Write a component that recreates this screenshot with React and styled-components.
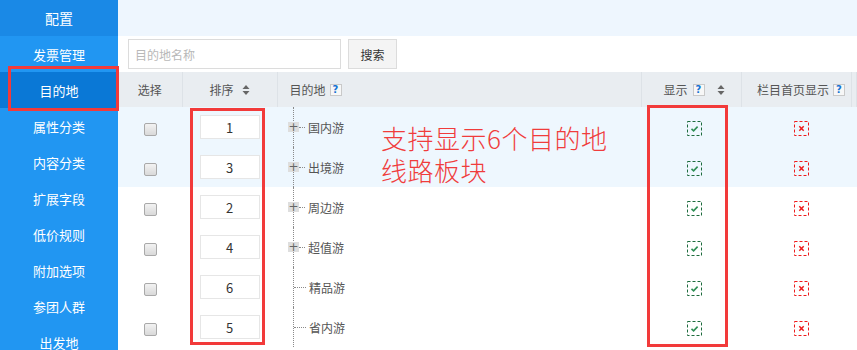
import React from 'react';
import styled, { createGlobalStyle } from 'styled-components';

const GlobalStyle = createGlobalStyle`
	html, body {
		margin: 0;
		padding: 0;
		background: #fff;
	}
	body {
		font-family: "Noto Sans CJK SC", "Noto Sans", sans-serif;
		font-size: 12px;
		color: #555;
	}
`;

const Page = styled.div`
	position: relative;
	display: flex;
	width: 857px;
	height: 350px;
	overflow: hidden;
`;

const Sidebar = styled.nav`
	width: 118px;
	flex-shrink: 0;
	background: #2196f2;
	display: flex;
	flex-direction: column;
	overflow: hidden;
`;

const SideHead = styled.div`
	height: 36px;
	flex-shrink: 0;
	display: flex;
	align-items: center;
	justify-content: center;
	background: #1a89e6;
	color: #fff;
	font-size: 14px;
`;

const NavItem = styled.div`
	height: 36px;
	flex-shrink: 0;
	display: flex;
	align-items: center;
	justify-content: center;
	color: #fff;
	font-size: 13px;
	background: ${props => props.active ? '#0a78d6' : 'transparent'};
`;

const Main = styled.main`
	flex: 1;
	display: flex;
	flex-direction: column;
	min-width: 0;
`;

const TopStrip = styled.div`
	height: 36px;
	flex-shrink: 0;
	background: #eef6fe;
`;

const Toolbar = styled.div`
	height: 36px;
	flex-shrink: 0;
	display: flex;
	align-items: center;
	gap: 7px;
	padding-left: 10px;
`;

const SearchInput = styled.input`
	box-sizing: border-box;
	width: 213px;
	height: 30px;
	border: 1px solid #dcdcdc;
	padding: 0 6px;
	font: inherit;
	font-size: 12px;
	outline: none;
	&::placeholder {
		color: #b8b8b8;
	}
`;

const SearchButton = styled.button`
	box-sizing: border-box;
	width: 49px;
	height: 30px;
	border: 1px solid #dcdcdc;
	background: #f4f4f4;
	font: inherit;
	font-size: 12px;
	color: #333;
	padding: 0;
`;

const Table = styled.table`
	border-collapse: collapse;
	table-layout: fixed;
	width: 739px;
`;

const Th = styled.th`
	height: 35px;
	padding: 0;
	background: #e9edf1;
	border-right: 1px solid #dde2e7;
	font-weight: normal;
	color: #555;
	text-align: ${props => props.align || 'center'};
	padding-left: ${props => props.pl || 0}px;
	white-space: nowrap;
`;

const HeadInner = styled.span`
	display: inline-flex;
	align-items: center;
	gap: ${props => props.gap || 4}px;
`;

const Row = styled.tr`
	background: ${props => props.highlight ? '#eef7fe' : '#fff'};
`;

const Td = styled.td`
	height: 40px;
	padding: 0;
	padding-left: ${props => props.pl || 0}px;
	text-align: center;
	vertical-align: middle;
`;

const TreeTd = styled.td`
	height: 40px;
	padding: 0 0 0 16px;
	vertical-align: top;
`;

const Checkbox = styled.span`
	display: inline-block;
	width: 11px;
	height: 11px;
	border: 1px solid #a9a9a9;
	border-radius: 2px;
	background: linear-gradient(#f2f2f2, #d9d9d9);
	vertical-align: middle;
`;

const SortInput = styled.span`
	box-sizing: border-box;
	display: inline-flex;
	align-items: center;
	justify-content: center;
	width: 60px;
	height: 24px;
	border: 1px solid #e6e6e6;
	background: #fff;
	color: #333;
	font-size: 13px;
	vertical-align: middle;
`;

const TreeNode = styled.div`
	height: 40px;
	border-left: 1px dotted #8a8a8a;
	display: flex;
	align-items: center;
`;

const Expander = styled.span`
	width: 11px;
	height: 10px;
	margin-left: -6px;
	background: #dedede;
	color: #666;
	display: flex;
	align-items: center;
	justify-content: center;
	font-size: 12px;
	line-height: 1;
	font-family: "DejaVu Sans", sans-serif;
`;

const Connector = styled.span`
	width: ${props => props.w}px;
	border-top: 1px dotted #8a8a8a;
`;

const NodeLabel = styled.span`
	margin-left: 3px;
	color: #555;
	font-size: 12px;
`;

const Help = styled.span`
	box-sizing: border-box;
	display: inline-flex;
	align-items: center;
	justify-content: center;
	width: 12px;
	height: 12px;
	border: 1px solid #c9c9c9;
	background: #f7f7f7;
	color: #1573d3;
	font-size: 10px;
	font-weight: bold;
	font-family: "DejaVu Sans", sans-serif;
`;

const Note = styled.div`
	position: absolute;
	left: 381px;
	top: 122px;
	color: #f03c3c;
	font-size: 26px;
	line-height: 32px;
	font-weight: 300;
	letter-spacing: 0.5px;
`;

const Mark = styled.div`
	position: absolute;
	box-sizing: border-box;
	border: 3px solid #f23a3a;
	left: ${props => props.x}px;
	top: ${props => props.y}px;
	width: ${props => props.w}px;
	height: ${props => props.h}px;
	pointer-events: none;
`;

function SortArrows() {
	return (
		<svg width="8" height="12" viewBox="0 0 8 12">
			<polygon points="4,1 7.5,5 0.5,5" fill="#666" />
			<polygon points="0.5,7 7.5,7 4,11" fill="#666" />
		</svg>
	);
}

function StatusIcon({ on }) {
	const color = on ? '#1d6b3c' : '#ee1b1b';
	return (
		<svg width="15" height="15" viewBox="0 0 15 15" style={{ verticalAlign: 'middle' }}>
			<rect x="0.5" y="0.5" width="14" height="14" fill="none" stroke={color} strokeDasharray="3 2" />
			{on
				? <path d="M4.5 7.8 L6.6 9.8 L10.6 5.6" fill="none" stroke="#2f8f55" strokeWidth="1.6" />
				: <path d="M5.3 5.3 L9.7 9.7 M9.7 5.3 L5.3 9.7" fill="none" stroke={color} strokeWidth="1.5" />}
		</svg>
	);
}

const menu = ['发票管理', '目的地', '属性分类', '内容分类', '扩展字段', '低价规则', '附加选项', '参团人群', '出发地'];

const rows = [
	{ order: 1, name: '国内游', expand: true },
	{ order: 3, name: '出境游', expand: true },
	{ order: 2, name: '周边游', expand: true },
	{ order: 4, name: '超值游', expand: true },
	{ order: 6, name: '精品游', expand: false },
	{ order: 5, name: '省内游', expand: false },
];

export default function App() {
	return (
		<>
			<GlobalStyle />
			<Page>
				<Sidebar>
					<SideHead>配置</SideHead>
					{menu.map(m => (
						<NavItem key={m} active={m === '目的地'}>{m}</NavItem>
					))}
				</Sidebar>
				<Main>
					<TopStrip />
					<Toolbar>
						<SearchInput placeholder="目的地名称" />
						<SearchButton>搜索</SearchButton>
					</Toolbar>
					<Table>
						<colgroup>
							<col style={{ width: 64 }} />
							<col style={{ width: 95 }} />
							<col style={{ width: 364 }} />
							<col style={{ width: 100 }} />
							<col style={{ width: 110 }} />
							<col />
						</colgroup>
						<thead>
							<tr>
								<Th>选择</Th>
								<Th><HeadInner gap={8}>排序<SortArrows /></HeadInner></Th>
								<Th align="left" pl={12}><HeadInner>目的地<Help>?</Help></HeadInner></Th>
								<Th pl={6}><HeadInner gap={5}>显示<Help>?</Help><span style={{ width: 2 }} /><SortArrows /></HeadInner></Th>
								<Th pl={10}><HeadInner>栏目首页显示<Help>?</Help></HeadInner></Th>
								<Th />
							</tr>
						</thead>
						<tbody>
							{rows.map((r, i) => (
								<Row key={r.name} highlight={i < 2}>
									<Td><Checkbox /></Td>
									<Td><SortInput>{r.order}</SortInput></Td>
									<TreeTd>
										<TreeNode>
											{r.expand && <Expander>+</Expander>}
											<Connector w={r.expand ? 6 : 12} />
											<NodeLabel>{r.name}</NodeLabel>
										</TreeNode>
									</TreeTd>
									<Td pl={6}><StatusIcon on /></Td>
									<Td pl={10}><StatusIcon /></Td>
									<Td />
								</Row>
							))}
						</tbody>
					</Table>
				</Main>
				<Note>支持显示6个目的地<br />线路板块</Note>
				<Mark x={8} y={66} w={111} h={45} />
				<Mark x={190} y={108} w={75} h={237} />
				<Mark x={647} y={105} w={81} h={242} />
			</Page>
		</>
	);
}
